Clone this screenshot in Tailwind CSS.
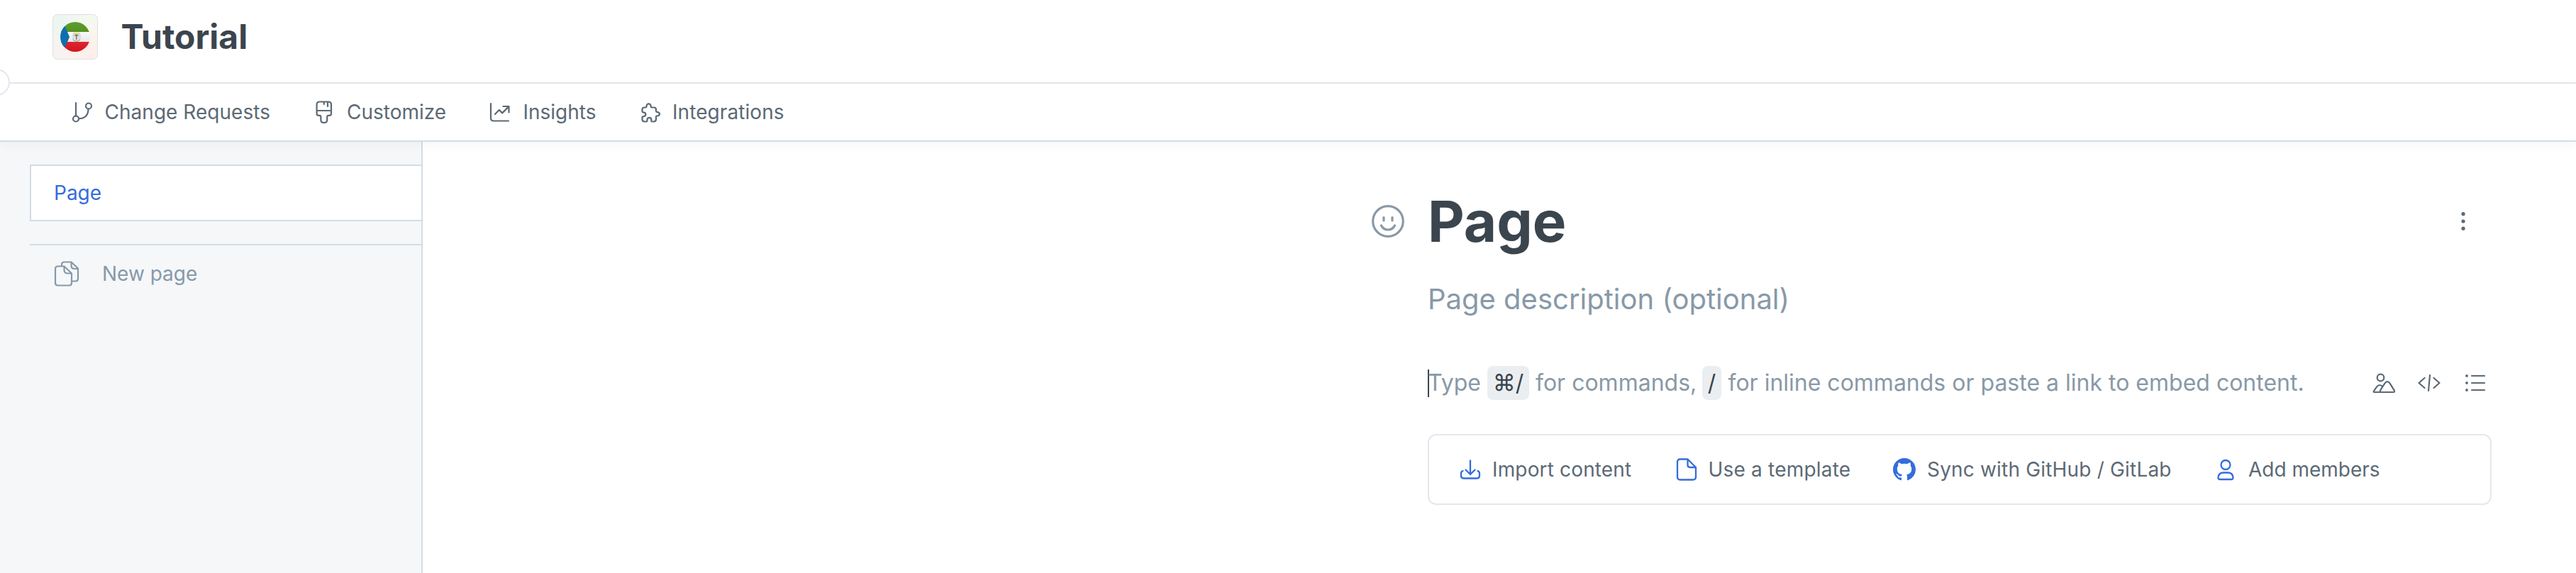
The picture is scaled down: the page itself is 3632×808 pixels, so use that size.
<!DOCTYPE html>
<html lang="en">
<head>
<meta charset="utf-8">
<title>Tutorial</title>
<script src="https://cdn.jsdelivr.net/npm/@tailwindcss/browser@4"></script>
</head>
<body class="w-[3632px] h-[808px] overflow-hidden bg-white font-['Inter',sans-serif] text-[28px] leading-[40px] text-[#5c6975] whitespace-nowrap flex flex-col">

<header class="relative h-[118px] border-b-2 border-[#e3e8ed] flex items-start pl-[74px] pt-5 shrink-0">
  <div class="size-16 rounded-[7px] border border-[#dfe0de] bg-[conic-gradient(from_45deg,#f5f9ef,#fdf3ed_15%,#fdeeea_25%,#f8f3f2_50%,#ebf6f0_75%,#f5f9ef)] flex items-center justify-center">
    <svg class="size-[42px]" viewBox="0 0 42 42">
      <defs>
        <clipPath id="disc"><circle cx="21" cy="21" r="21"/></clipPath>
        <linearGradient id="green" x2="0" y2="1"><stop stop-color="#5c9e31"/><stop offset="1" stop-color="#55911f"/></linearGradient>
        <linearGradient id="red" x2="0" y2="1"><stop stop-color="#e0242e"/><stop offset="1" stop-color="#cf1620"/></linearGradient>
        <linearGradient id="white" x2="0" y2="1"><stop stop-color="#f9f9f9"/><stop offset="1" stop-color="#e9e9e9"/></linearGradient>
      </defs>
      <g clip-path="url(#disc)">
        <rect width="42" height="14" fill="url(#green)"/>
        <rect y="14" width="42" height="14" fill="url(#white)"/>
        <rect y="28" width="42" height="14" fill="url(#red)"/>
        <path d="M0 0H4L13 21L4 42H0Z" fill="#0d6fb0"/>
      </g>
      <path d="M18 16.500h10v6q0 4-5 5q-5-1-5-5z" fill="#e4e4e4" stroke="#b5b5b5" stroke-width=".6"/>
      <path d="M18.500 15.200h8.500" stroke="#f4cf3d" stroke-width="1.300" stroke-dasharray="1.300 .6"/>
      <path d="M22.800 19v6" stroke="#7a5134" stroke-width="1.200"/>
      <path d="M19.800 20q0-2.500 3-2.500t3 2.500q-1.500-1-3-.6q-1.500-.4-3 .6z" fill="#4b8a2c"/>
      <path d="M17.500 25q5 4 10.500 0" stroke="#999" stroke-width="1" fill="none"/>
    </svg>
  </div>
  <h1 class="ml-[32.500px] leading-[64px] text-5xl font-bold text-[#3b454e]">Tutorial</h1>
  <div class="absolute z-20 -left-6 top-[97px] size-[38px] rounded-full border-2 border-[#e3e8ed] bg-white"></div>
</header>

<nav class="relative z-10 h-[82px] border-b-2 border-[#d3dce6] bg-white shadow-[0_4px_14px_rgba(0,0,0,0.04)] shrink-0 flex items-center pl-[100px]">
  <a class="flex items-center w-[341px]">
    <svg class="size-8 mr-[15.500px]" viewBox="0 0 32 32" fill="none" stroke="currentColor" stroke-width="2.200" stroke-linecap="round"><path d="M7 3v19M11 25.200c8 .3 13.500-4.500 13.500-13.500"/><circle cx="7" cy="25.500" r="4"/><circle cx="25" cy="7.500" r="4"/></svg>
    <span class="tracking-[0.03px]">Change Requests</span>
  </a>
  <a class="flex items-center w-[246px]">
    <svg class="size-8 mr-4" viewBox="0 0 32 32" fill="none" stroke="currentColor" stroke-width="2.200" stroke-linecap="round" stroke-linejoin="round"><path d="M9.500 1.500h12.500q4 0 4 4v12.800q0 2.500-2.500 2.500h-1.300q-2 0-2 2v4.500q0 3.700-4.400 3.700t-4.400-3.700v-4.500q0-2-2-2h-1.300q-2.500 0-2.500-2.500v-12.800q0-4 4-4zM5.500 14h20.500M15.800 1.500v3.500M21 1.500v6.500"/></svg>
    <span>Customize</span>
  </a>
  <a class="flex items-center w-[213px]">
    <svg class="size-8 mr-[18.500px]" viewBox="0 0 32 32" fill="none" stroke="currentColor" stroke-width="2.200" stroke-linecap="round" stroke-linejoin="round"><path d="M5 4v20.500q0 4 4 4h21M11 19l5.800-6l4.400 4.400l9.300-9.300M22.500 8h8v8.500"/></svg>
    <span>Insights</span>
  </a>
  <a class="flex items-center">
    <svg class="size-8 mr-4" viewBox="0 0 32 32" fill="none" stroke="currentColor" stroke-width="2.200" stroke-linejoin="round"><path d="M11.500 8.500c-.5-5.500 6.700-5.500 6.200 0q0 1 1 1h3.300q3 0 3 3v2.300q0 1 1 1c5.300.5 5.300 5.200 0 5.700q-1 0-1 1v3.500q0 3.500-3.500 3.500h-2.200q-1 0-1-1v-1.800c0-3.800-5.800-3.800-5.800 0v1.800q0 1-1 1h-2.500q-3.500 0-3.500-3.500v-2.700q0-1 1-1c5.200 0 5.200-6 0-6q-1 0-1-1v-2.800q0-3 3-3h2q1 0 1-1z"/></svg>
    <span class="tracking-[0.080px]">Integrations</span>
  </a>
</nav>

<main class="flex flex-1">
  <aside class="w-[596px] bg-[#f5f7f9] border-r-2 border-[#d3dce6] pl-[42px] pt-8 shrink-0">
    <div class="h-20 border-2 border-r-0 border-[#d3dce6] bg-white pl-8 flex items-center text-[#346ddb]">Page</div>
    <div class="mt-8 border-t-2 border-[#d3dce6] h-[82px] pl-[34px] flex items-center text-[#8899a8]">
      <svg class="w-[36px] h-9 mr-8" viewBox="0 0 36 36" fill="none" stroke="currentColor" stroke-width="2.200" stroke-linejoin="round"><path d="M14.500 7.500h-9q-3.500 0-3.500 3.500v20q0 3.500 3.500 3.500h16q3.500 0 3.500-3.500v-13.500zM14.500 7.500v5q0 5 5 5h5.500"/><path d="M11 7.500v-2.500q0-3.500 3.500-3.500h10l9.500 9v14.500q0 3.500-3.500 3.500h-5M24.500 1.500v5q0 4.500 4.500 4.500h5"/></svg>
      <span>New page</span>
    </div>
  </aside>

  <section class="ml-[1338px] pt-14 w-[1579px]">
    <div class="flex items-center h-28">
      <svg class="size-12 mr-[31px] text-[#8899a8]" viewBox="0 0 48 48" fill="none" stroke="currentColor" stroke-width="3.200" stroke-linecap="round"><circle cx="23" cy="24" r="21.300"/><path d="M17 18.500v4.500M29 18.500v4.500M13.500 30q3 6 9.500 6t9.500-6"/></svg>
      <h2 class="text-[80px] leading-[112px] font-bold text-[#3b454e]">Page</h2>
      <svg class="size-8 ml-auto mr-[24px]" viewBox="0 0 32 32" fill="currentColor"><circle cx="16" cy="5.700" r="2.600"/><circle cx="16" cy="16" r="2.600"/><circle cx="16" cy="26.200" r="2.600"/></svg>
    </div>

    <p class="ml-[79px] mt-[26px] text-[40px] leading-[56px] text-[#8899a8]">Page description (optional)</p>

    <div class="ml-[79px] mt-[66px] flex items-center h-12 text-[32px] leading-[48px] text-[#8899a8]">
      <span class="w-0.5 h-[39px] bg-[#3b454e] -mr-0.5"></span>
      <span class="w-[84px]">Type</span>
      <kbd class="w-[59px] h-12 rounded-lg bg-[#ebeef1] text-[#3b454e] text-center font-['Inter',sans-serif]">⌘/</kbd>
      <span class="ml-[9px] w-[235px]">for commands,</span>
      <kbd class="w-[27px] h-12 rounded-lg bg-[#ebeef1] text-[#3b454e] text-center font-['Inter',sans-serif]">/</kbd>
      <span class="ml-[9.500px]">for inline commands or paste a link to embed content.</span>
      <span class="ml-auto mr-2 flex gap-8 text-[#5c6975]">
        <svg class="size-8" viewBox="0 0 32 32" fill="none" stroke="currentColor" stroke-width="2.200" stroke-linejoin="round"><circle cx="11.500" cy="8.500" r="4.800"/><path d="M3 29h26.500q2.500 0 1.500-2.200l-6.200-10q-3.800-5.500-7.600 0l-5.200 8q-1.500 2.200-1 4.200M14.500 21.500q-4.500-5-8.500 0l-4 5.800q-.8 1.700 1 1.700"/></svg>
        <svg class="size-8" viewBox="0 0 32 32" fill="none" stroke="currentColor" stroke-width="2.200" stroke-linecap="round" stroke-linejoin="round"><path d="M9.500 9l-8 7l8 7M22.500 9l8 7l-8 7M17 5l-2 22"/></svg>
        <svg class="size-8" viewBox="-1 0 32 32" stroke="currentColor" stroke-width="2.200" stroke-linecap="round" fill="currentColor"><path d="M11 6h18M11 16h18M11 26h18"/><g stroke="none"><circle cx="4" cy="6" r="1.900"/><circle cx="4" cy="16" r="1.900"/><circle cx="4" cy="26" r="1.900"/></g></svg>
      </span>
    </div>

    <div class="ml-[79px] mt-12 w-[1500px] h-[100px] rounded-xl border-2 border-[#e3e8ed] flex items-center pl-[42px]">
      <a class="flex items-center w-[305px]">
        <svg class="size-8 mr-[15px] text-[#346ddb]" viewBox="0 0 32 32" fill="none" stroke="currentColor" stroke-width="2.300" stroke-linecap="round" stroke-linejoin="round"><path d="M16 3.500v19M9.500 16.500l6.500 6.500l6.500-6.500M5.500 18q-2.500 1-2.500 3.500v3.500q0 3.500 3.500 3.500h19q3.500 0 3.500-3.500v-3.500q0-2.500-2.500-3.500"/></svg>
        <span class="tracking-[0.150px]">Import content</span>
      </a>
      <a class="flex items-center w-[307px]">
        <svg class="size-8 mr-[14.500px] text-[#346ddb]" viewBox="0 0 32 32" fill="none" stroke="currentColor" stroke-width="2.300" stroke-linejoin="round"><path d="M17.500 1.500h-10.500q-4 0-4 4v21q0 4 4 4h18q4 0 4-4v-13.500zM17.500 1.500v8q0 3.500 3.500 3.500h8"/></svg>
        <span class="tracking-[0.200px]">Use a template</span>
      </a>
      <a class="flex items-center w-[453px]">
        <svg class="size-8 mr-4 text-[#346ddb]" viewBox="0 0 16 16" fill="currentColor"><path d="M8 0C3.580 0 0 3.580 0 8c0 3.540 2.290 6.530 5.470 7.590.4.070.55-.17.55-.38 0-.19-.01-.82-.01-1.490-2.010.37-2.530-.49-2.690-.94-.09-.23-.48-.94-.82-1.130-.28-.15-.68-.52-.01-.53.63-.01 1.080.58 1.230.82.72 1.210 1.870.87 2.330.66.07-.52.28-.87.51-1.070-1.780-.2-3.640-.89-3.640-3.950 0-.87.31-1.590.82-2.150-.08-.2-.36-1.020.08-2.120 0 0 .67-.21 2.200.82.64-.18 1.320-.27 2-.27s1.360.09 2 .27c1.530-1.040 2.200-.82 2.200-.82.44 1.100.16 1.920.08 2.120.51.56.82 1.270.82 2.150 0 3.070-1.870 3.750-3.650 3.950.29.25.54.73.54 1.480 0 1.070-.01 1.930-.01 2.200 0 .21.15.46.55.38A8.010 8.010 0 0 0 16 8c0-4.420-3.580-8-8-8z"/></svg>
        <span class="tracking-[0.180px]">Sync with GitHub / GitLab</span>
      </a>
      <a class="flex items-center">
        <svg class="size-8 mr-4 text-[#346ddb]" viewBox="0 0 32 32" fill="none" stroke="currentColor" stroke-width="2.300" stroke-linejoin="round"><circle cx="16" cy="9.500" r="6.500"/><path d="M13 20.500h6q7 0 7.500 7q0 2.500-2.500 2.500h-16q-2.500 0-2.500-2.500q.5-7 7.500-7z"/></svg>
        <span>Add members</span>
      </a>
    </div>
  </section>
</main>
</body>
</html>
